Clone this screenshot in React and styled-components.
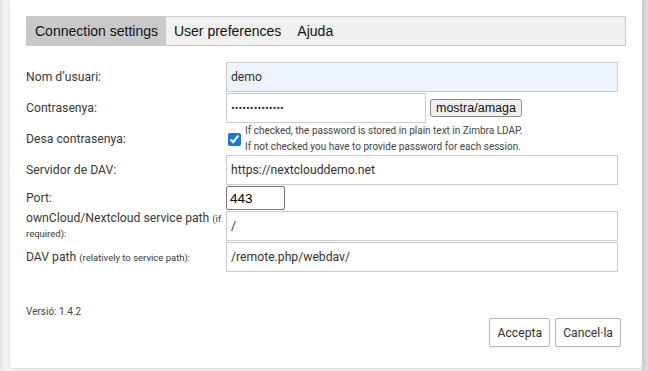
import React from "react";
import styled, { createGlobalStyle } from "styled-components";

const Global = createGlobalStyle`
  html, body { margin: 0; padding: 0; }
  body {
    background: #e4e4e4;
    font-family: Roboto, "Liberation Sans", sans-serif;
    overflow: hidden;
  }
`;

const Page = styled.div`
  width: 648px;
  height: 371px;
  box-sizing: border-box;
  padding: 0 6px 3px 10px;
  background: linear-gradient(to right, #e6e6e6 0px, #fbfbfb 9px, #fbfbfb 640px, #d6d6d6 643px, #dcdcdc 648px);
`;

const Dialog = styled.div`
  width: 632px;
  height: 368px;
  box-sizing: border-box;
  background: #fff;
  padding: 16px 16px 0 16px;
  box-shadow: 0 1px 4px rgba(0, 0, 0, 0.18);
  border-radius: 0 0 3px 3px;
  display: flex;
  flex-direction: column;
`;

const TabBar = styled.div`
  display: flex;
  height: 30px;
  box-sizing: border-box;
  border: 1px solid #cacaca;
  background: #f0f0f0;
`;

const Tab = styled.div`
  padding: 0 8px;
  display: flex;
  align-items: center;
  font-family: "Liberation Sans", Arial, sans-serif;
  font-size: 14px;
  color: #111;
  background: ${(p) => (p.$active ? "#c8c8c8" : "transparent")};
`;

const Form = styled.div`
  display: grid;
  grid-template-columns: 200px 392px;
  row-gap: 1px;
  margin-top: 16px;
`;

const Label = styled.div`
  display: flex;
  align-items: center;
  font-size: 12.2px;
  line-height: 15px;
  color: #3a3a3a;
`;

const Small = styled.span`
  font-size: 9.5px;
  line-height: 15px;
`;

const Field = styled.div`
  display: flex;
  align-items: center;
  min-height: ${(p) => p.$h || 30}px;
`;

const TextInput = styled.input`
  box-sizing: border-box;
  width: ${(p) => p.$w || 392}px;
  height: 30px;
  margin: 0;
  border: 1px solid #cccccc;
  border-radius: 0;
  padding: 0 4px;
  font-family: Roboto, sans-serif;
  font-size: ${(p) => p.$fs || 12.2}px;
  color: #333;
  background: ${(p) => (p.$filled ? "#edf4fd" : "#fff")};
  outline: none;
`;

const PortInput = styled.input`
  box-sizing: border-box;
  width: 59px;
  height: 24px;
  margin: 0;
  border: 1px solid #767676;
  border-radius: 2px;
  padding: 0 3px;
  font-family: "Liberation Sans", Arial, sans-serif;
  font-size: 13.5px;
  color: #000;
  background: #fff;
  outline: none;
`;

const SmallButton = styled.button`
  margin: 0 0 0 4px;
  height: 18px;
  padding: 0 5px;
  font-family: "Liberation Sans", Arial, sans-serif;
  font-size: 12.5px;
  line-height: 16px;
  color: #111;
  background: #efefef;
  border: 1px solid #8a8a8a;
  border-radius: 3px;
`;

const CheckRow = styled.div`
  display: flex;
  align-items: center;
  height: 30px;
`;

const Check = styled.input`
  width: 13px;
  height: 13px;
  margin: 0 4px 0 2px;
  accent-color: #1a73e8;
`;

const Hint = styled.div`
  font-size: 10px;
  line-height: 16px;
  color: #444;
`;

const Footer = styled.div`
  margin-top: 34px;
  margin-right: 5px;
  display: flex;
  flex-direction: column;
`;

const Version = styled.div`
  font-size: 10px;
  line-height: 12px;
  color: #444;
`;

const Buttons = styled.div`
  display: flex;
  justify-content: flex-end;
  gap: 5px;
`;

const Button = styled.button`
  height: 29px;
  padding: 0 7px;
  font-family: Roboto, sans-serif;
  font-size: 12.2px;
  color: #333;
  background: #fff;
  border: 1px solid #b4b4b4;
  border-radius: 2px;
`;

export default function App() {
  return (
    <>
      <Global />
      <Page>
        <Dialog>
          <TabBar>
            <Tab $active>Connection settings</Tab>
            <Tab>User preferences</Tab>
            <Tab>Ajuda</Tab>
          </TabBar>
          <Form>
            <Label>Nom d’usuari:</Label>
            <Field>
              <TextInput $filled defaultValue="demo" />
            </Field>

            <Label>Contrasenya:</Label>
            <Field>
              <TextInput $w={200} $fs={11.2} type="password" defaultValue="demodemodemode" />
              <SmallButton>mostra/amaga</SmallButton>
            </Field>

            <Label>Desa contrasenya:</Label>
            <CheckRow>
              <Check type="checkbox" defaultChecked />
              <Hint>
                If checked, the password is stored in plain text in Zimbra LDAP.
                <br />
                If not checked you have to provide password for each session.
              </Hint>
            </CheckRow>

            <Label>Servidor de DAV:</Label>
            <Field>
              <TextInput defaultValue="https://nextclouddemo.net" />
            </Field>

            <Label>Port:</Label>
            <Field $h={24}>
              <PortInput defaultValue="443" />
            </Field>

            <Label>
              <span>
                ownCloud/Nextcloud service path <Small>(if required):</Small>
              </span>
            </Label>
            <Field>
              <TextInput defaultValue="/" />
            </Field>

            <Label>
              <span>
                DAV path <Small>(relatively to service path):</Small>
              </span>
            </Label>
            <Field>
              <TextInput defaultValue="/remote.php/webdav/" />
            </Field>
          </Form>
          <Footer>
            <Version>Versió: 1.4.2</Version>
            <Buttons>
              <Button>Accepta</Button>
              <Button>Cancel·la</Button>
            </Buttons>
          </Footer>
        </Dialog>
      </Page>
    </>
  );
}
